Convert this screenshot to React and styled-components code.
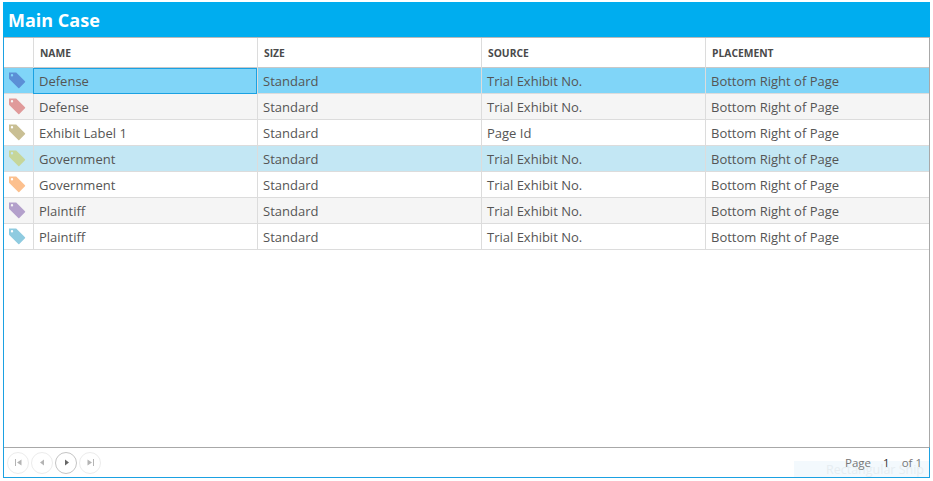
import React from "react"
import styled, { createGlobalStyle } from "styled-components"

const GlobalStyle = createGlobalStyle`
  html, body {
    margin: 0;
    background: #fff;
    font-family: "Open Sans", "Noto Sans", sans-serif;
  }
`

const Page = styled.div`
  width: 933px;
  height: 481px;
  box-sizing: border-box;
  padding: 2px 3px 3px;
  background: #fff;
`

const Panel = styled.div`
  height: 100%;
  display: flex;
  flex-direction: column;
  position: relative;
`

const TitleBar = styled.div`
  height: 35px;
  flex: none;
  box-sizing: border-box;
  padding: 0 0 0 5px;
  background: #00adef;
  color: #fff;
  font-size: 18px;
  font-weight: 700;
  line-height: 36px;
`

const Body = styled.div`
  flex: 1;
  min-height: 0;
  display: flex;
  flex-direction: column;
  border: 1px solid #1ba1e2;
  border-top: 0;
  border-right-color: #a8a8a8;
`

const Grid = styled.div`
  flex: 1;
  min-height: 0;
  border-top: 1px solid #b9b9b9;
`

const Row = styled.div`
  display: grid;
  grid-template-columns: 29px 224px 224px 224px 1fr;
  height: ${p => (p.$head ? "30px" : "26px")};
  box-sizing: border-box;
  border-bottom: 1px solid ${p => (p.$head ? "#c8c8c8" : "#dcdcdc")};
  background: ${p => p.$bg || "#fff"};
`

const Cell = styled.div`
  box-sizing: border-box;
  border-left: 1px solid ${p => (p.$first ? "transparent" : "#dcdcdc")};
  padding-left: 5px;
  font-size: 13px;
  line-height: 26px;
  color: #555;
  white-space: nowrap;
  ${p => p.$focus && `
    outline: 1px solid #1ba1e2;
    outline-offset: -1px;
    border-left-color: #1ba1e2;
  `}
`

const HeadCell = styled(Cell)`
  padding-left: 6px;
  font-size: 10.3px;
  font-weight: 700;
  line-height: 30px;
  color: #4a4a4a;
`

const IconCell = styled(Cell)`
  padding: 3px 0 0 3px;
  line-height: 0;
`

const Footer = styled.div`
  height: 31px;
  flex: none;
  box-sizing: border-box;
  display: flex;
  align-items: center;
  justify-content: space-between;
  padding: 0 7px 0 3px;
  border-top: 1px solid #a8a8a8;
  border-bottom: 1px solid #1ba1e2;
  border-right: 1px solid #1ba1e2;
  margin: 0 -1px -1px 0;
`

const Pager = styled.div`
  display: flex;
  gap: 2px;
`

const PagerButton = styled.div`
  width: 22px;
  height: 22px;
  box-sizing: border-box;
  display: flex;
  align-items: center;
  justify-content: center;
  border-radius: 50%;
  border: 1px solid ${p => (p.$active ? "#c4c4c4" : "#ececec")};
  color: ${p => (p.$active ? "#666" : "#b4b4b4")};
`

const PageInfo = styled.div`
  display: flex;
  gap: 12px;
  font-size: 11.5px;
  color: #777;
  position: relative;
  z-index: 1;
  margin-bottom: 1px;
`

const PageNumber = styled.span`
  color: #333;
`

const SnipGhost = styled.div`
  position: absolute;
  right: 1px;
  bottom: 1px;
  width: 135px;
  height: 16px;
  background: #f3f9fd;
  color: #e6edf1;
  font-size: 12.5px;
  line-height: 14px;
  padding: 2px 0 0 32px;
  box-sizing: border-box;
  white-space: nowrap;
`

const TagIcon = ({ color }) => (
  <svg width="18" height="18" viewBox="0 0 18 18">
    <path
      fillRule="evenodd"
      fill={color}
      d="M1 1.5 H8.2 L17 10.3 Q17.4 10.8 17 11.3 L11.3 17 Q10.8 17.4 10.3 17 L1.5 8.2 Q1 7.8 1 7.2 Z M4 3 A1.2 1.2 0 1 0 4 5.4 A1.2 1.2 0 1 0 4 3 Z"
    />
  </svg>
)

const First = () => (
  <svg width="9" height="9" viewBox="0 0 9 9" fill="currentColor">
    <path d="M1 1h1v7H1zM7.5 1.5v6L3 4.5z" />
  </svg>
)
const Prev = () => (
  <svg width="9" height="9" viewBox="0 0 9 9" fill="currentColor">
    <path d="M6 1.5v6L2 4.5z" />
  </svg>
)
const Next = () => (
  <svg width="9" height="9" viewBox="0 0 9 9" fill="currentColor">
    <path d="M3 1.5v6L7 4.5z" />
  </svg>
)
const Last = () => (
  <svg width="9" height="9" viewBox="0 0 9 9" fill="currentColor">
    <path d="M7 1h1v7H7zM1.5 1.5v6L6 4.5z" />
  </svg>
)

const rows = [
  { name: "Defense", source: "Trial Exhibit No.", tag: "#5b8fd6", bg: "#80d5f8", focus: true },
  { name: "Defense", source: "Trial Exhibit No.", tag: "#e09a9a", bg: "#f5f5f5" },
  { name: "Exhibit Label 1", source: "Page Id", tag: "#c9bf94" },
  { name: "Government", source: "Trial Exhibit No.", tag: "#c6d69a", bg: "#c3e7f4" },
  { name: "Government", source: "Trial Exhibit No.", tag: "#fcc08e" },
  { name: "Plaintiff", source: "Trial Exhibit No.", tag: "#b3a0cb", bg: "#f5f5f5" },
  { name: "Plaintiff", source: "Trial Exhibit No.", tag: "#8fcbe0" },
]

export default function App() {
  return (
    <Page>
      <GlobalStyle />
      <Panel>
        <TitleBar>Main Case</TitleBar>
        <Body>
          <Grid>
            <Row $head>
              <HeadCell $first />
              <HeadCell>NAME</HeadCell>
              <HeadCell>SIZE</HeadCell>
              <HeadCell>SOURCE</HeadCell>
              <HeadCell>PLACEMENT</HeadCell>
            </Row>
            {rows.map((r, i) => (
              <Row key={i} $bg={r.bg}>
                <IconCell $first>
                  <TagIcon color={r.tag} />
                </IconCell>
                <Cell $focus={r.focus}>{r.name}</Cell>
                <Cell>Standard</Cell>
                <Cell>{r.source}</Cell>
                <Cell>Bottom Right of Page</Cell>
              </Row>
            ))}
          </Grid>
          <Footer>
            <Pager>
              <PagerButton><First /></PagerButton>
              <PagerButton><Prev /></PagerButton>
              <PagerButton $active><Next /></PagerButton>
              <PagerButton><Last /></PagerButton>
            </Pager>
            <PageInfo>
              <span>Page</span>
              <PageNumber>1</PageNumber>
              <span>of 1</span>
            </PageInfo>
          </Footer>
        </Body>
        <SnipGhost>Rectangular Snip</SnipGhost>
      </Panel>
    </Page>
  )
}
